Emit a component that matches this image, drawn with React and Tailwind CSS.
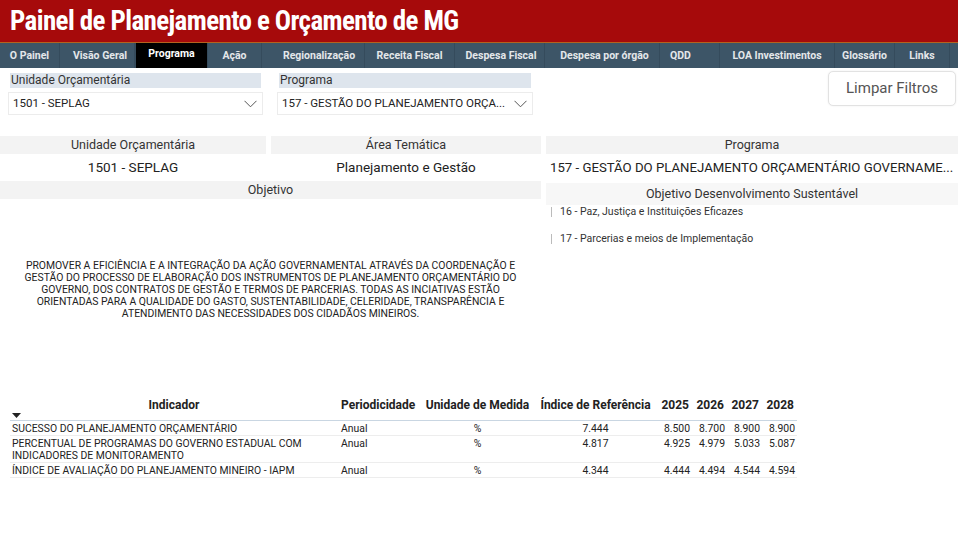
import React from 'react';

const tabs = [
  { nome: 'O Painel', w: 'w-[60px]' },
  { nome: 'Visão Geral', w: 'w-[75px] pl-[6px]' },
  { nome: 'Programa', w: 'w-[73px]', ativo: true },
  { nome: 'Ação', w: 'w-[54px]' },
  { nome: 'Regionalização', w: 'w-[103px] pl-[12px]' },
  { nome: 'Receita Fiscal', w: 'w-[90px]' },
  { nome: 'Despesa Fiscal', w: 'w-[90px] pl-[3px]' },
  { nome: 'Despesa por órgão', w: 'w-[115px] pl-[5px]' },
  { nome: 'QDD', w: 'w-[60px] pr-[18px]' },
  { nome: 'LOA Investimentos', w: 'w-[115px]' },
  { nome: 'Glossário', w: 'w-[60px]' },
  { nome: 'Links', w: 'w-[55px]' },
];

const indicadores = [
  {
    nome: 'SUCESSO DO PLANEJAMENTO ORÇAMENTÁRIO',
    ref: '7.444',
    anos: ['8.500', '8.700', '8.900', '8.900'],
  },
  {
    nome: 'PERCENTUAL DE PROGRAMAS DO GOVERNO ESTADUAL COM INDICADORES DE MONITORAMENTO',
    ref: '4.817',
    anos: ['4.925', '4.979', '5.033', '5.087'],
  },
  {
    nome: 'ÍNDICE DE AVALIAÇÃO DO PLANEJAMENTO MINEIRO - IAPM',
    ref: '4.344',
    anos: ['4.444', '4.494', '4.544', '4.594'],
  },
];

const cols = 'grid grid-cols-[328px_82px_115px_121px_36px_35px_35px_35px]';

function Chevron() {
  return (
    <svg width="13" height="8" viewBox="0 0 13 8" fill="none" stroke="#555" strokeWidth="1">
      <path d="M0.5 0.8 L6.5 6.8 L12.5 0.8" />
    </svg>
  );
}

function Filtro({ label, valor, largura }) {
  return (
    <div className={`flex flex-col ${largura}`}>
      <div className="mx-[2px] h-[15px] bg-[#dee5ed] px-[1px] text-[12px] leading-[15px] text-[#333]">
        {label}
      </div>
      <div className="mt-[4px] flex h-[23px] items-center justify-between gap-[8px] border border-[#ececec] pl-[4px] pr-[5px] text-[11.5px] text-[#222]">
        <span className="whitespace-nowrap">{valor}</span>
        <Chevron />
      </div>
    </div>
  );
}

function App() {
  return (
    <div
      className="h-[536px] w-[958px] overflow-hidden bg-white"
      style={{ fontFamily: 'Roboto, "Noto Sans", sans-serif' }}
    >
      {/* cabeçalho */}
      <div className="flex h-[43px] items-center border-b border-[#b4631f] bg-[#a60a0b] pl-[10px]">
        <h1
          className="text-[27px] font-bold leading-none tracking-[-0.6px] text-white"
          style={{ fontFamily: '"Roboto Condensed", "Liberation Sans Narrow", "DejaVu Sans Condensed", Roboto, sans-serif' }}
        >
          Painel de Planejamento e Orçamento de MG
        </h1>
      </div>

      {/* navegação */}
      <div className="flex h-[25px] bg-[#3d5567]">
        {tabs.map((t) => (
          <div
            key={t.nome}
            className={`${t.w} flex items-center justify-center border-r border-[#354b5c] text-[10.5px] font-bold whitespace-nowrap ${
              t.ativo ? 'bg-black pb-[3px] text-white border-x border-[#5a4a3a]' : 'text-[#e4e7ea]'
            }`}
          >
            {t.nome}
          </div>
        ))}
      </div>

      {/* filtros */}
      <div className="flex items-start pt-[5px]">
        <div className="ml-[8px]">
          <Filtro label="Unidade Orçamentária" valor="1501 - SEPLAG" largura="w-[255px]" />
        </div>
        <div className="ml-[14px]">
          <Filtro label="Programa" valor="157 - GESTÃO DO PLANEJAMENTO ORÇA..." largura="w-[256px]" />
        </div>
        <button className="ml-auto mr-[2px] mt-[-2px] h-[35px] w-[128px] rounded-[5px] border border-[#e2e2e2] bg-white text-[15px] text-[#555] shadow-[0_0_2px_rgba(0,0,0,0.08)]">
          Limpar Filtros
        </button>
      </div>

      {/* cartões */}
      <div className="mt-[21px] flex gap-[5px]">
        <div className="w-[266px]">
          <div className="h-[18px] bg-[#f3f3f3] text-center text-[12.5px] leading-[18px] text-[#333]">Unidade Orçamentária</div>
          <div className="h-[27px] text-center text-[13.5px] leading-[27px] text-[#222]">1501 - SEPLAG</div>
        </div>
        <div className="w-[270px]">
          <div className="h-[18px] bg-[#f3f3f3] text-center text-[12.5px] leading-[18px] text-[#333]">Área Temática</div>
          <div className="h-[27px] text-center text-[13.5px] leading-[27px] text-[#222]">Planejamento e Gestão</div>
        </div>
        <div className="w-[412px]">
          <div className="h-[18px] bg-[#f3f3f3] text-center text-[12.5px] leading-[18px] text-[#333]">Programa</div>
          <div className="h-[27px] whitespace-nowrap pl-[4px] text-[13.2px] leading-[28px] text-[#222]">
            157 - GESTÃO DO PLANEJAMENTO ORÇAMENTÁRIO GOVERNAME...
          </div>
        </div>
      </div>

      <div className="flex items-start gap-[5px]">
        <div className="w-[541px]">
          <div className="h-[18px] bg-[#f3f3f3] text-center text-[12.5px] leading-[18px] text-[#333]">Objetivo</div>
          <div className="h-[198px] pt-[61px]">
            <p className="text-center text-[10.4px] leading-[12px] text-[#222]">
              PROMOVER A EFICIÊNCIA E A INTEGRAÇÃO DA AÇÃO GOVERNAMENTAL ATRAVÉS DA COORDENAÇÃO E
              <br />
              GESTÃO DO PROCESSO DE ELABORAÇÃO DOS INSTRUMENTOS DE PLANEJAMENTO ORÇAMENTÁRIO DO
              <br />
              GOVERNO, DOS CONTRATOS DE GESTÃO E TERMOS DE PARCERIAS. TODAS AS INCIATIVAS ESTÃO
              <br />
              ORIENTADAS PARA A QUALIDADE DO GASTO, SUSTENTABILIDADE, CELERIDADE, TRANSPARÊNCIA E
              <br />
              ATENDIMENTO DAS NECESSIDADES DOS CIDADÃOS MINEIROS.
            </p>
          </div>
        </div>
        <div className="w-[412px]">
          <div className="mt-[2px] h-[22px] bg-[#f7f7f7] text-center text-[12.5px] leading-[22px] text-[#333]">
            Objetivo Desenvolvimento Sustentável
          </div>
          <div className="flex flex-col gap-[15px] pl-[5px] pt-[1px]">
            {['16 - Paz, Justiça e Instituições Eficazes', '17 - Parcerias e meios de Implementação'].map((o) => (
              <div key={o} className="flex h-[12px] items-center">
                <span className="h-[10px] w-px bg-[#bbb]" />
                <span className="pl-[8px] text-[10.5px] text-[#333]">{o}</span>
              </div>
            ))}
          </div>
        </div>
      </div>

      {/* tabela de indicadores */}
      <div className="ml-[10px] w-[787px]">
        <div className={`${cols} h-[24px] items-start border-b border-[#c9d6e2] text-[12px] font-bold text-[#222]`}>
          <div className="relative text-center leading-[16px]">
            Indicador
            <svg className="absolute left-[2px] top-[16px]" width="9" height="5" viewBox="0 0 9 5">
              <path d="M0 0 L9 0 L4.5 5 Z" fill="#222" />
            </svg>
          </div>
          <div className="pl-[3px] leading-[16px]">Periodicidade</div>
          <div className="text-center leading-[16px]">Unidade de Medida</div>
          <div className="text-center leading-[16px]">Índice de Referência</div>
          <div className="pr-[3px] text-right leading-[16px]">2025</div>
          <div className="pr-[3px] text-right leading-[16px]">2026</div>
          <div className="pr-[3px] text-right leading-[16px]">2027</div>
          <div className="pr-[3px] text-right leading-[16px]">2028</div>
        </div>
        {indicadores.map((i) => (
          <div key={i.nome} className={`${cols} border-b border-[#ededed] pt-[2px] text-[10.4px] leading-[12px] text-[#222]`}>
            <div className="pl-[2px] pr-[12px]">{i.nome}</div>
            <div className="pl-[3px]">Anual</div>
            <div className="text-center">%</div>
            <div className="text-center">{i.ref}</div>
            {i.anos.map((a, k) => (
              <div key={k} className="pr-[2px] text-right">
                {a}
              </div>
            ))}
          </div>
        ))}
      </div>
    </div>
  );
}

export default App;
